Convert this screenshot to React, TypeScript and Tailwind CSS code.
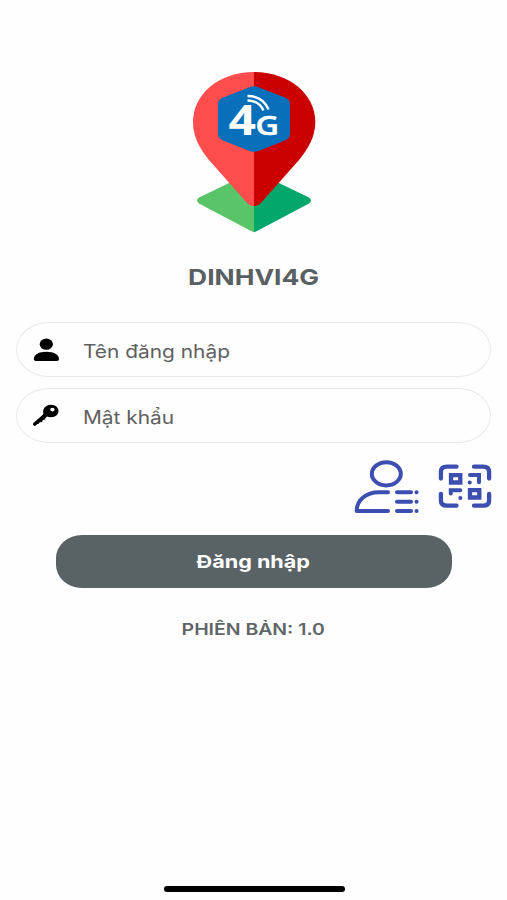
import type { ReactNode } from "react";

function Logo() {
  return (
    <svg className="mt-[68px] h-[168px] w-[130px] shrink-0" viewBox="189 68 130 168" aria-label="4G">
      <path d="M254 171 L199 197.5 Q195 200.5 199 203.5 L251 231 Q254 232.5 254 232Z" fill="#5ac568" />
      <path d="M254 171 L309 197.5 Q313 200.5 309 203.5 L257 231 Q254 232.5 254 232Z" fill="#03a76b" />
      <path d="M254 72 C219 72 193 94 193 122 C193 137 200 149 209 160 L248 204 Q251 206.500 254 206Z" fill="#ff4c4d" />
      <path d="M254 72 C289 72 315.300 94 315.300 122 C315.300 137 308 149 299 160 L260 204 Q257 206.500 254 206Z" fill="#cb0000" />
      <path d="M249 87.500 Q254 85 259 87.500 L285 97.500 Q290 99.500 290 104 V134 Q290 138 285 140.500 L259 150.700 Q254 153 249 150.700 L223 140.500 Q218 138 218 134 V104 Q218 99.500 223 97.500Z" fill="#0870ba" />
      <g fill="#fff" fontFamily="'Open Sans', sans-serif" fontWeight="600">
        <text x="228.500" y="134.800" fontSize="40.500" fontWeight="700" textLength="27.500" lengthAdjust="spacingAndGlyphs">4</text>
        <text x="255.500" y="135.400" fontSize="27.500" stroke="#fff" strokeWidth="0.500" textLength="23.500" lengthAdjust="spacingAndGlyphs">G</text>
      </g>
      <g fill="none" stroke="#fff" strokeWidth="2.300">
        <path d="M247.500 96 C258 96 265 101 268.500 109.500" />
        <path d="M247.500 100.500 C256 100.500 260.500 104 263.500 110.500" />
      </g>
    </svg>
  );
}

function UserIcon() {
  return (
    <svg className="h-[26px] w-[30px] shrink-0" viewBox="31 337 30 26" fill="#000">
      <ellipse cx="46.300" cy="344.200" rx="6.600" ry="5.600" />
      <path d="M33.800 359 C33.800 354.500 39 351.700 46.300 351.700 S59 354.500 59 359 Q59 361 57 361 H35.800 Q33.800 361 33.800 359Z" />
    </svg>
  );
}

function KeyIcon() {
  return (
    <svg className="h-[26px] w-[30px] shrink-0" viewBox="31 401.700 30 26">
      <path d="M45.500 414.500 L34.800 423.700" stroke="#000" strokeWidth="3.600" strokeLinecap="round" />
      <path fill="#000" fillRule="evenodd" d="M51 404.500 C55.300 404.500 58.500 407.300 58.500 410.800 C58.500 414.300 55.300 417 51 417 C49.500 417 48.200 416.700 47 416.200 L45.300 417.700 V419.300 L42.700 419.700 L42.200 421.700 L39.400 422 L38.800 423.500 H36.500 L43.500 413.500 C42 409 45.500 404.500 51 404.500Z M54.600 409.300 A2.200 1.900 0 1 0 50.200 409.300 A2.200 1.900 0 1 0 54.600 409.300Z" />
    </svg>
  );
}

function Field({ icon, label, type }: { icon: ReactNode; label: string; type: string }) {
  return (
    <div className="flex h-[55px] w-[475px] items-center rounded-[33px/27.5px] border-[1.5px] border-[#e9e9e9] pl-[14px]">
      {icon}
      <input
        type={type}
        placeholder={label}
        className="mt-[4px] ml-[22px] w-[300px] origin-left scale-x-[1.16] bg-transparent text-[18px] text-[#606060] outline-none placeholder:text-[#606060] placeholder:opacity-100"
      />
    </div>
  );
}

function AccountListIcon() {
  return (
    <svg className="h-[54px] w-[66px]" viewBox="354 460 66 54" fill="none" stroke="#3c4eb0" strokeWidth="4" strokeLinecap="round" strokeLinejoin="round">
      <ellipse cx="386.300" cy="473.800" rx="14.500" ry="11.600" />
      <path d="M388 492.300 H379 C366 492.300 356.700 500 356.700 511 H388" />
      <path d="M397 492.300 H411 M397 501.700 H411 M397 511 H411 M416.500 492.300 H416.600 M416.500 501.700 H416.600 M416.500 511 H416.600" />
    </svg>
  );
}

function QrIcon() {
  return (
    <svg className="h-[46px] w-[56px]" viewBox="437 463 56 46" fill="none" stroke="#3c4eb0" strokeWidth="4.300" strokeLinecap="round" strokeLinejoin="round">
      <path d="M456.500 466.700 H447 Q440.900 466.700 440.900 472 V478.500 M474 466.700 H483 Q489.100 466.700 489.100 472 V478.500 M440.900 494 V500.500 Q440.900 505.700 447 505.700 H456.500 M474 505.700 H483 Q489.100 505.700 489.100 500.500 V494" />
      <path strokeLinejoin="miter" d="M451 475.200 H460.300 V482.500 H451Z M470 490.200 H479.300 V497.500 H470Z" />
      <path strokeWidth="4" strokeLinejoin="miter" d="M470 475 H479 V482.300 M469.700 482.500 H469.800 M450.800 493.500 V490.200 H460.300 M460.300 498 H460.400" />
    </svg>
  );
}

export default function App() {
  return (
    <main className="flex h-[900px] w-[507px] flex-col items-center overflow-hidden bg-[#fefefe] font-['Inter',sans-serif]">
      <Logo />
      <h1 className="mt-[24px] flex h-[34px] shrink-0 scale-x-[1.2] items-center text-[22px] leading-none font-bold text-[#596063]">DINHVI4G</h1>
      <section className="mt-[28px] flex flex-col gap-[10.5px]">
        <Field icon={<UserIcon />} label="Tên đăng nhập" type="text" />
        <Field icon={<KeyIcon />} label="Mật khẩu" type="password" />
      </section>
      <div className="mt-[17.5px] flex w-full items-start gap-[17px] pl-[354px]">
        <AccountListIcon />
        <div className="mt-[3px]"><QrIcon /></div>
      </div>
      <button className="mt-[20.5px] flex h-[53px] w-[396px] shrink-0 items-center justify-center rounded-[26px/23px] bg-[#596265]">
        <span className="scale-x-[1.2] text-[18px] font-bold text-white">Đăng nhập</span>
      </button>
      <p className="mt-[29.5px] flex h-[26px] shrink-0 scale-x-[1.23] items-center text-[15.8px] leading-none font-semibold text-[#606568]">PHIÊN BẢN: 1.0</p>
      <div className="mt-auto mb-[8px] ml-[1px] h-[6px] w-[181px] shrink-0 rounded-full bg-black" />
    </main>
  );
}
